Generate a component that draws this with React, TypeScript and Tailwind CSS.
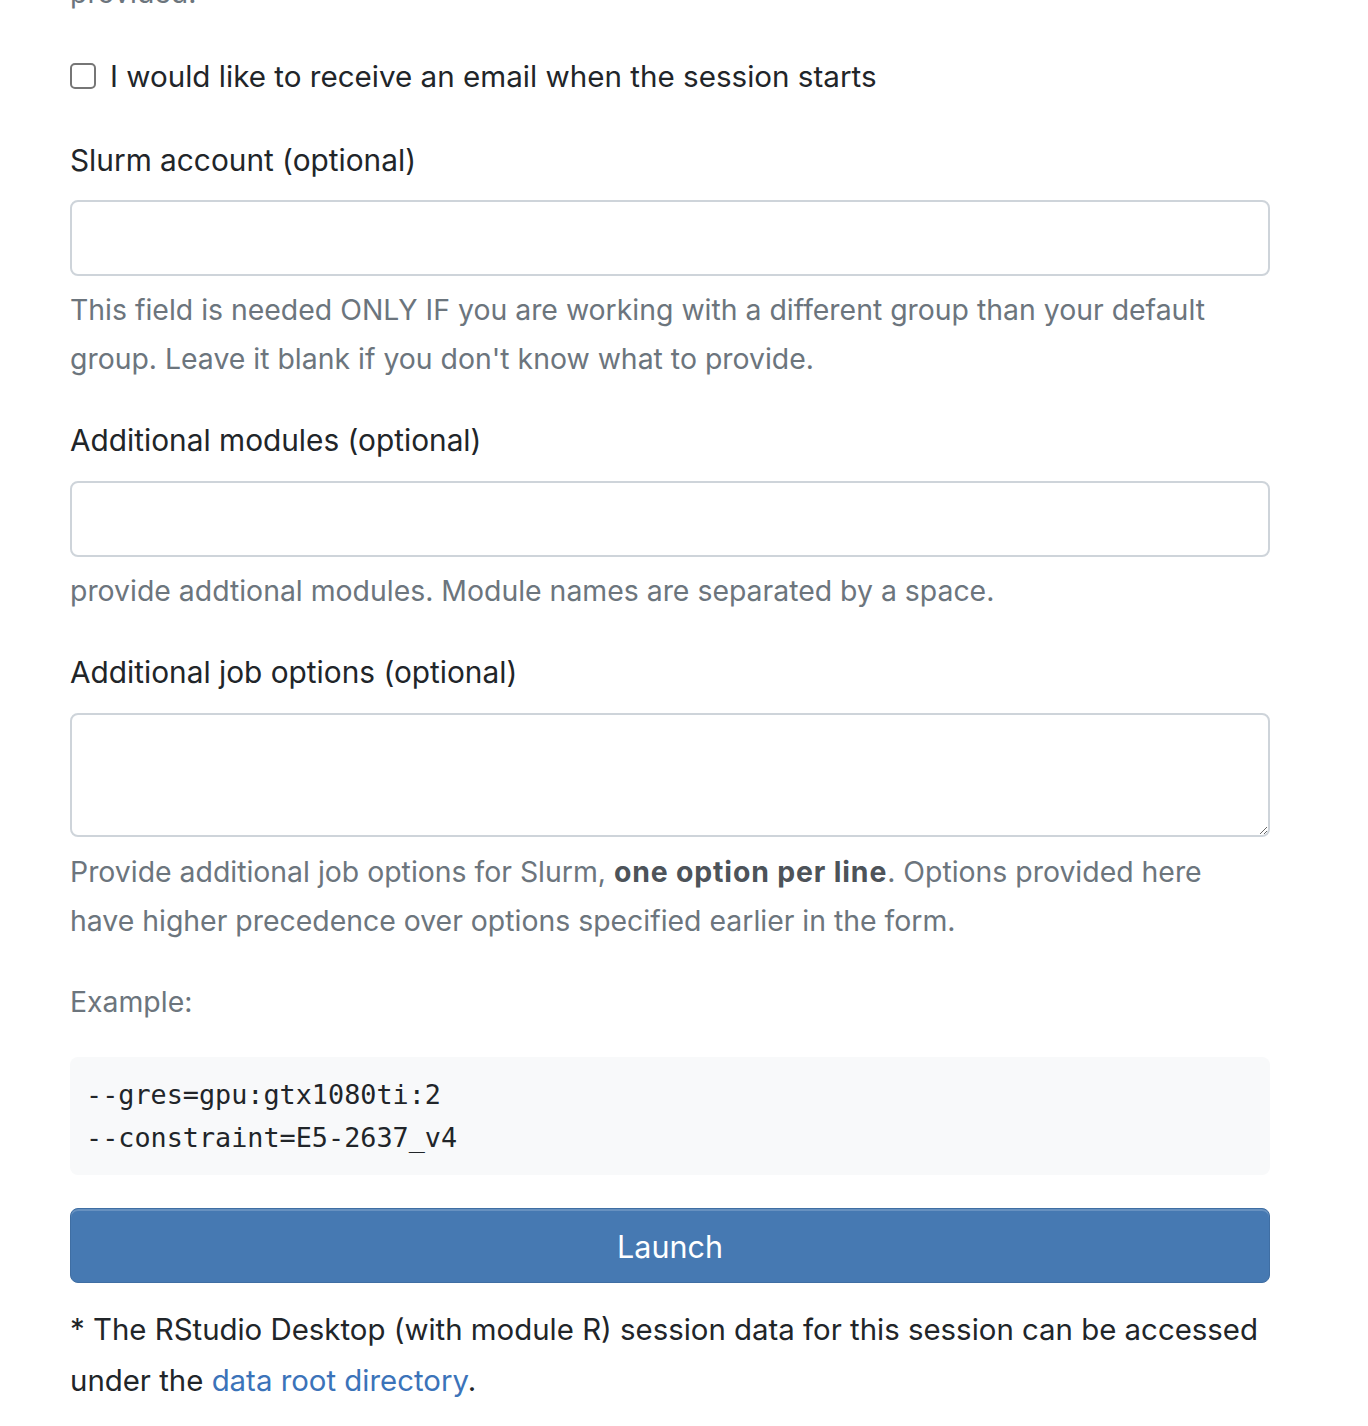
import React from "react";

const font = "font-['Inter','Noto_Sans',sans-serif]";

const Help = ({ children, className = "" }: { children: React.ReactNode; className?: string }) => (
  <p className={`text-[28.4px] leading-[49px] text-[#6c757d] ${className}`}>{children}</p>
);

const Label = ({ children, className = "" }: { children: React.ReactNode; className?: string }) => (
  <label className={`block text-[29.8px] leading-[42px] text-[#212529] ${className}`}>{children}</label>
);

export default function App() {
  return (
    <div className={`min-h-[1426px] w-full overflow-hidden bg-white ${font}`}>
      <div className="ml-[70px] w-[1200px]">
        <Help className="-mt-[32px]">provided.</Help>

        {/* email notification */}
        <div className="mt-[38px] flex items-center gap-[14px]">
          <span className="h-[26px] w-[26px] shrink-0 rounded-[5px] border-2 border-[#767676] bg-white" />
          <span className="text-[29.6px] leading-[42px] text-[#212529]">
            I would like to receive an email when the session starts
          </span>
        </div>

        <Label className="mt-[42px]">Slurm account (optional)</Label>
        <input
          type="text"
          className="mt-[19px] block h-[76px] w-full rounded-[8px] border-2 border-[#ced4da] bg-white px-[24px] text-[28px] outline-none"
        />
        <Help className="mt-[9px]">
          This field is needed ONLY IF you are working with a different group than your default group. Leave it
          blank if you don't know what to provide.
        </Help>

        <Label className="mt-[36px]">Additional modules (optional)</Label>
        <input
          type="text"
          className="mt-[20px] block h-[76px] w-full rounded-[8px] border-2 border-[#ced4da] bg-white px-[24px] text-[28px] outline-none"
        />
        <Help className="mt-[9px]">provide addtional modules. Module names are separated by a space.</Help>

        <Label className="mt-[36px]">Additional job options (optional)</Label>
        <textarea className="mt-[20px] block h-[124px] w-full resize-y rounded-[8px] border-2 border-[#ced4da] bg-white px-[24px] py-[12px] text-[28px] outline-none" />
        <Help className="mt-[10px]">
          Provide additional job options for Slurm,{" "}
          <strong className="font-bold tracking-[0.03em] text-[#4d5359]">one option per line</strong>. Options
          provided here have higher precedence over options specified earlier in the form.
        </Help>

        <Help className="mt-[32px]">Example:</Help>
        <pre className="mt-[31px] rounded-[8px] bg-[#f8f9fa] px-[16px] pb-[16px] pt-[16px] font-['DejaVu_Sans_Mono',monospace] text-[26.8px] leading-[43px] text-[#212529]">
          {"--gres=gpu:gtx1080ti:2\n--constraint=E5-2637_v4"}
        </pre>

        <button className="mt-[33px] block h-[75px] w-full rounded-[8px] border border-[#3f6ea3] bg-[#4679b2] pt-[2px] text-[30.5px] text-white shadow-[inset_0_2px_0_rgba(255,255,255,0.18)]">
          Launch
        </button>

        <p className="mt-[21px] text-[29.4px] leading-[51px] text-[#212529]">
          * The RStudio Desktop (with module R) session data for this session can be accessed under the{" "}
          <a href="#" className="text-[#3b73b9]">
            data root directory
          </a>
          .
        </p>
      </div>
    </div>
  );
}
